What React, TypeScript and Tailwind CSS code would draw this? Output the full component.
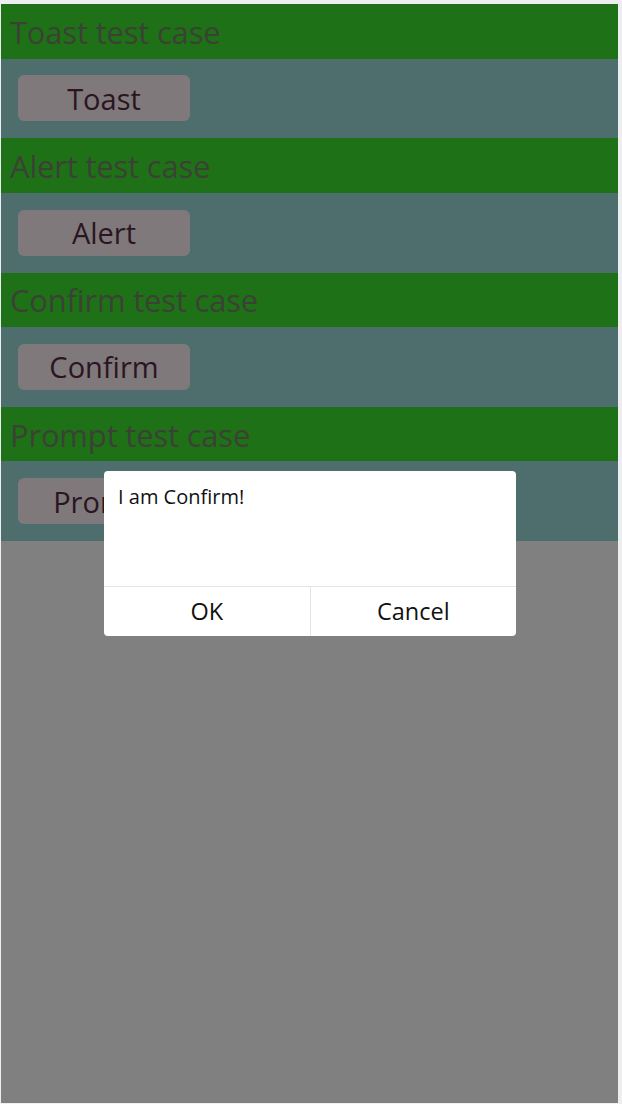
import React from "react";

const cases = ["Toast", "Alert", "Confirm", "Prompt"];

export default function App() {
  return (
    <div
      className="w-[622px] h-[1104px] bg-[#eceef0] pt-[4px] pl-[1px] pr-[4px] pb-[1px] overflow-hidden"
      style={{ fontFamily: '"Open Sans", "Noto Sans", sans-serif' }}
    >
      <div className="relative h-full bg-[#808080]">
        {cases.map((c) => (
          <div key={c} className="flex flex-col">
            <div className="h-[54.5px] bg-[#1f7117] flex items-center pl-[9px]">
              <span className="text-[31px] leading-none text-[#3b4235] tracking-[-0.2px] relative top-[1px]">
                {c} test case
              </span>
            </div>
            <div className="h-[79.75px] bg-[#4e6e6e] flex items-center pl-[17px]">
              <div className="w-[172px] h-[46px] rounded-[6px] bg-[#7f797b] flex items-center justify-center">
                <span className="text-[29px] leading-none text-[#2b1522]">{c}</span>
              </div>
            </div>
          </div>
        ))}
        <div className="absolute left-[103px] top-[467px] w-[412px] h-[165px] bg-white rounded-[4px] flex flex-col overflow-hidden">
          <div className="flex-1 pl-[14px] pt-[15px]">
            <span className="text-[20px] leading-none text-[#111]">I am Confirm!</span>
          </div>
          <div className="h-[50px] border-t border-[#e4e4e4] flex">
            <div className="flex-1 flex items-center justify-center border-r border-[#e4e4e4]">
              <span className="text-[23.5px] leading-none text-[#111]">OK</span>
            </div>
            <div className="flex-1 flex items-center justify-center">
              <span className="text-[23.5px] leading-none text-[#111]">Cancel</span>
            </div>
          </div>
        </div>
      </div>
    </div>
  );
}
